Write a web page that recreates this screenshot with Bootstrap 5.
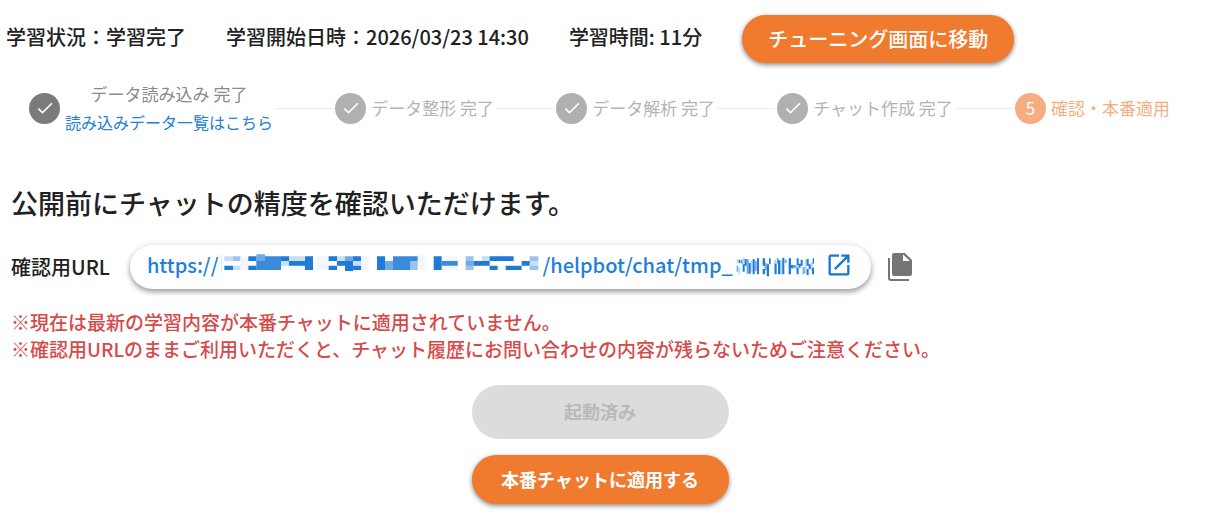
<!DOCTYPE html>
<html lang="ja">
<head>
<meta charset="utf-8">
<meta name="viewport" content="width=device-width, initial-scale=1">
<title>学習状況</title>
<link href="https://cdn.jsdelivr.net/npm/bootstrap@5.3.0/dist/css/bootstrap.min.css" rel="stylesheet">
<script src="https://cdn.jsdelivr.net/npm/bootstrap@5.3.0/dist/js/bootstrap.bundle.min.js" defer></script>
<style>
body{font-family:"Noto Sans CJK JP",sans-serif;color:#212121;background:#fff}
.status-bar{padding:15px 6px 0;column-gap:40px;font-size:20px;line-height:30px;font-weight:500}
.status-bar p{padding-bottom:4px}
.btn-action,.btn-action:hover{background:#f07a2d;color:#fff;box-shadow:0 2px 4px rgba(0,0,0,.35),0 1px 6px rgba(0,0,0,.15)}
.btn-move{font-size:20px;font-weight:500;line-height:30px;padding:9px 26px;border:0}
.stepper{padding:17px 41px 0 29px;font-size:17px;line-height:28px;color:#b3b3b3}
.stepper li{gap:5px}
.step-dot{width:31px;height:31px;background:#b0b0b0;color:#fff;flex:none}
.step-line{height:1px;background:#ececec;min-width:16px;margin:0 2px}
.step-first{color:#8a8a8a}
.step-first .step-dot{background:#7b7b7b}
.step-first a{font-size:16px}
.step-now{color:#f6ae81}
.step-now .step-dot{background:#f6ae81}
.stepper a,.url-pill{color:#2080d8;text-decoration:none}
.confirm{padding:47px 22px 24px 11px}
.confirm h1{font-size:27px;line-height:40px;font-weight:500;margin-bottom:22px}
.url-row{font-size:20px;line-height:30px;font-weight:500}
.url-pill{padding:5px 18px 9px 17px;gap:3px;box-shadow:0 3px 5px rgba(0,0,0,.32),0 1px 9px rgba(0,0,0,.12);margin-left:20px}
.copy-btn{color:#757575;margin-left:16px}
.note{font-size:19px;line-height:27px;font-weight:500;color:#d64a4a;margin-top:19px}
.actions{width:257px;gap:16px;margin-top:23px}
.actions .btn{font-size:18px;font-weight:700;line-height:27px;padding:11px 12px;border:0}
.actions .btn:disabled{background:#dcdcdc;color:#b9b9b9;opacity:1;padding:13px 12px 14px}
</style>
</head>
<body>
<header class="status-bar d-flex flex-wrap align-items-center">
  <p class="mb-0">学習状況：学習完了</p>
  <p class="mb-0">学習開始日時：2026/03/23 14:30</p>
  <p class="mb-0">学習時間: 11分</p>
  <button type="button" class="btn btn-action btn-move rounded-pill">チューニング画面に移動</button>
</header>

<ol class="stepper list-unstyled d-flex align-items-center mb-0 text-nowrap">
  <li class="step-first d-flex align-items-center">
    <span class="step-dot rounded-circle d-flex align-items-center justify-content-center"><svg width="20" height="20" viewBox="0 0 24 24" fill="#fff" aria-hidden="true"><path d="M9 16.2 4.8 12l-1.4 1.4L9 19 21 7l-1.4-1.4z"/></svg></span>
    <span class="text-center">データ読み込み 完了<br><a href="#data">読み込みデータ一覧はこちら</a></span>
  </li>
  <li class="step-line flex-fill" aria-hidden="true"></li>
  <li class="d-flex align-items-center">
    <span class="step-dot rounded-circle d-flex align-items-center justify-content-center"><svg width="20" height="20" viewBox="0 0 24 24" fill="#fff" aria-hidden="true"><path d="M9 16.2 4.8 12l-1.4 1.4L9 19 21 7l-1.4-1.4z"/></svg></span>
    <span>データ整形 完了</span>
  </li>
  <li class="step-line flex-fill" aria-hidden="true"></li>
  <li class="d-flex align-items-center">
    <span class="step-dot rounded-circle d-flex align-items-center justify-content-center"><svg width="20" height="20" viewBox="0 0 24 24" fill="#fff" aria-hidden="true"><path d="M9 16.2 4.8 12l-1.4 1.4L9 19 21 7l-1.4-1.4z"/></svg></span>
    <span>データ解析 完了</span>
  </li>
  <li class="step-line flex-fill" aria-hidden="true"></li>
  <li class="d-flex align-items-center">
    <span class="step-dot rounded-circle d-flex align-items-center justify-content-center"><svg width="20" height="20" viewBox="0 0 24 24" fill="#fff" aria-hidden="true"><path d="M9 16.2 4.8 12l-1.4 1.4L9 19 21 7l-1.4-1.4z"/></svg></span>
    <span>チャット作成 完了</span>
  </li>
  <li class="step-line flex-fill" aria-hidden="true"></li>
  <li class="step-now d-flex align-items-center">
    <span class="step-dot rounded-circle d-flex align-items-center justify-content-center">5</span>
    <span>確認・本番適用</span>
  </li>
</ol>

<main class="confirm">
  <h1>公開前にチャットの精度を確認いただけます。</h1>
  <div class="url-row d-flex align-items-center">
    <span>確認用URL</span>
    <a href="#chat" class="url-pill rounded-pill d-flex align-items-center text-nowrap">
      <span>https://</span>
      <!-- masked host name -->
      <svg class="align-self-start" width="318" height="22" viewBox="42 47 954 66" fill="#1f7bd6" aria-hidden="true">
        <path opacity=".25" d="M42 60h2v53h-2zM52 66h26v14H52zM78 94h22v13H78zM222 80h24v14h-24zM246 66h48v14h-48zM390 66h24v14h-24zM438 80h24v14h-24zM825 66h25v14h-25zM968 80h26v14h-26z"/>
        <path opacity=".06" d="M100 66h24v41h-24zM246 94h48v13h-48zM330 66h35v41h-35zM462 66h24v41h-24zM632 60h23v47h-23zM704 66h48v41h-48z"/>
        <path opacity=".45" d="M78 66h22v14H78zM610 80h22v27h-22zM776 66h24v14h-24zM776 94h24v13h-24zM968 66h26v14h-26zM968 94h26v13h-26z"/>
        <path opacity=".65" d="M148 60h26v20h-26zM414 66h24v14h-24zM534 80h24v27h-24zM776 80h24v14h-24z"/>
        <path opacity=".88" d="M148 80h26v27h-26zM174 66h48v41h-48zM558 66h52v41h-52zM610 66h22v14h-22zM704 80h48v14h-48z"/>
        <path d="M52 94h26v13H52zM124 66h24v14h-24zM124 94h24v13h-24zM222 66h24v14h-24zM246 80h48v14h-48zM294 66h24v41h-24zM365 66h25v14h-25zM365 94h25v13h-25zM390 80h48v14h-48zM414 94h24v16h-24zM438 66h24v14h-24zM438 94h24v13h-24zM510 66h24v41h-24zM680 66h24v41h-24zM800 80h48v14h-48zM848 66h72v14h-72zM848 94h24v13h-24zM896 94h48v13h-48zM944 80h24v14h-24z"/>
      </svg>
      <span>/helpbot/chat/tmp_</span>
      <!-- masked chat id -->
      <svg class="align-self-start" width="78" height="27" viewBox="160 45 234 81" fill="#1f7bd6" aria-hidden="true">
        <path opacity=".3" d="M162 72h5v12h-5zM168 98h5v20h-5zM180 68h6v18h-6zM204 76h6v34h-6zM274 74h6v44h-6zM294 74h6v44h-6zM340 90h6v20h-6zM366 72h6v42h-6zM384 82h6v26h-6z"/>
        <path opacity=".65" d="M162 92h5v18h-5zM174 74h6v12h-6zM192 72h6v44h-6zM216 78h6v30h-6zM246 84h6v22h-6zM282 70h6v16h-6zM306 74h6v10h-6zM330 90h10v10h-10zM360 96h6v22h-6z"/>
        <path d="M168 74h5v10h-5zM180 88h6v22h-6zM186 72h6v20h-6zM198 84h6v32h-6zM210 72h6v46h-6zM223 70h6v48h-6zM240 70h7v22h-7zM240 102h7v16h-7zM252 88h7v36h-7zM259 70h5v18h-5zM276 86h6v32h-6zM286 76h7v42h-7zM299 68h6v50h-6zM318 70h7v48h-7zM325 90h6v10h-6zM342 70h6v20h-6zM348 86h6v12h-6zM342 98h6v20h-6zM354 74h6v18h-6zM372 72h6v20h-6zM378 88h6v14h-6zM372 102h6v18h-6zM390 70h5v16h-5zM388 98h6v20h-6z"/>
      </svg>
      <svg class="ms-2" width="28" height="28" viewBox="0 0 24 24" fill="#1976d2" role="img" aria-label="新しいタブで開く"><path d="M19 19H5V5h7V3H5c-1.110 0-2 .9-2 2v14c0 1.100.89 2 2 2h14c1.100 0 2-.9 2-2v-7h-2zM14 3v2h3.590l-9.830 9.830 1.410 1.410L19 6.410V10h2V3z"/></svg>
    </a>
    <button type="button" class="copy-btn btn p-0 border-0 d-flex" aria-label="コピー">
      <svg width="26" height="30" viewBox="0 0 26 30" fill="currentColor" aria-hidden="true"><path d="M1 6h2v20q0 1 1 1h18v2H4q-3 0-3-3zM7 1h11l7 7v14q0 2-2 2H7q-2 0-2-2V3q0-2 2-2zm9 1.500V9h7z" fill-rule="evenodd"/></svg>
    </button>
  </div>
  <p class="note mb-0">※現在は最新の学習内容が本番チャットに適用されていません。<br>※確認用URLのままご利用いただくと、チャット履歴にお問い合わせの内容が残らないためご注意ください。</p>
  <div class="actions d-grid mx-auto">
    <button type="button" class="btn rounded-pill" disabled>起動済み</button>
    <button type="button" class="btn btn-action rounded-pill">本番チャットに適用する</button>
  </div>
</main>
</body>
</html>
